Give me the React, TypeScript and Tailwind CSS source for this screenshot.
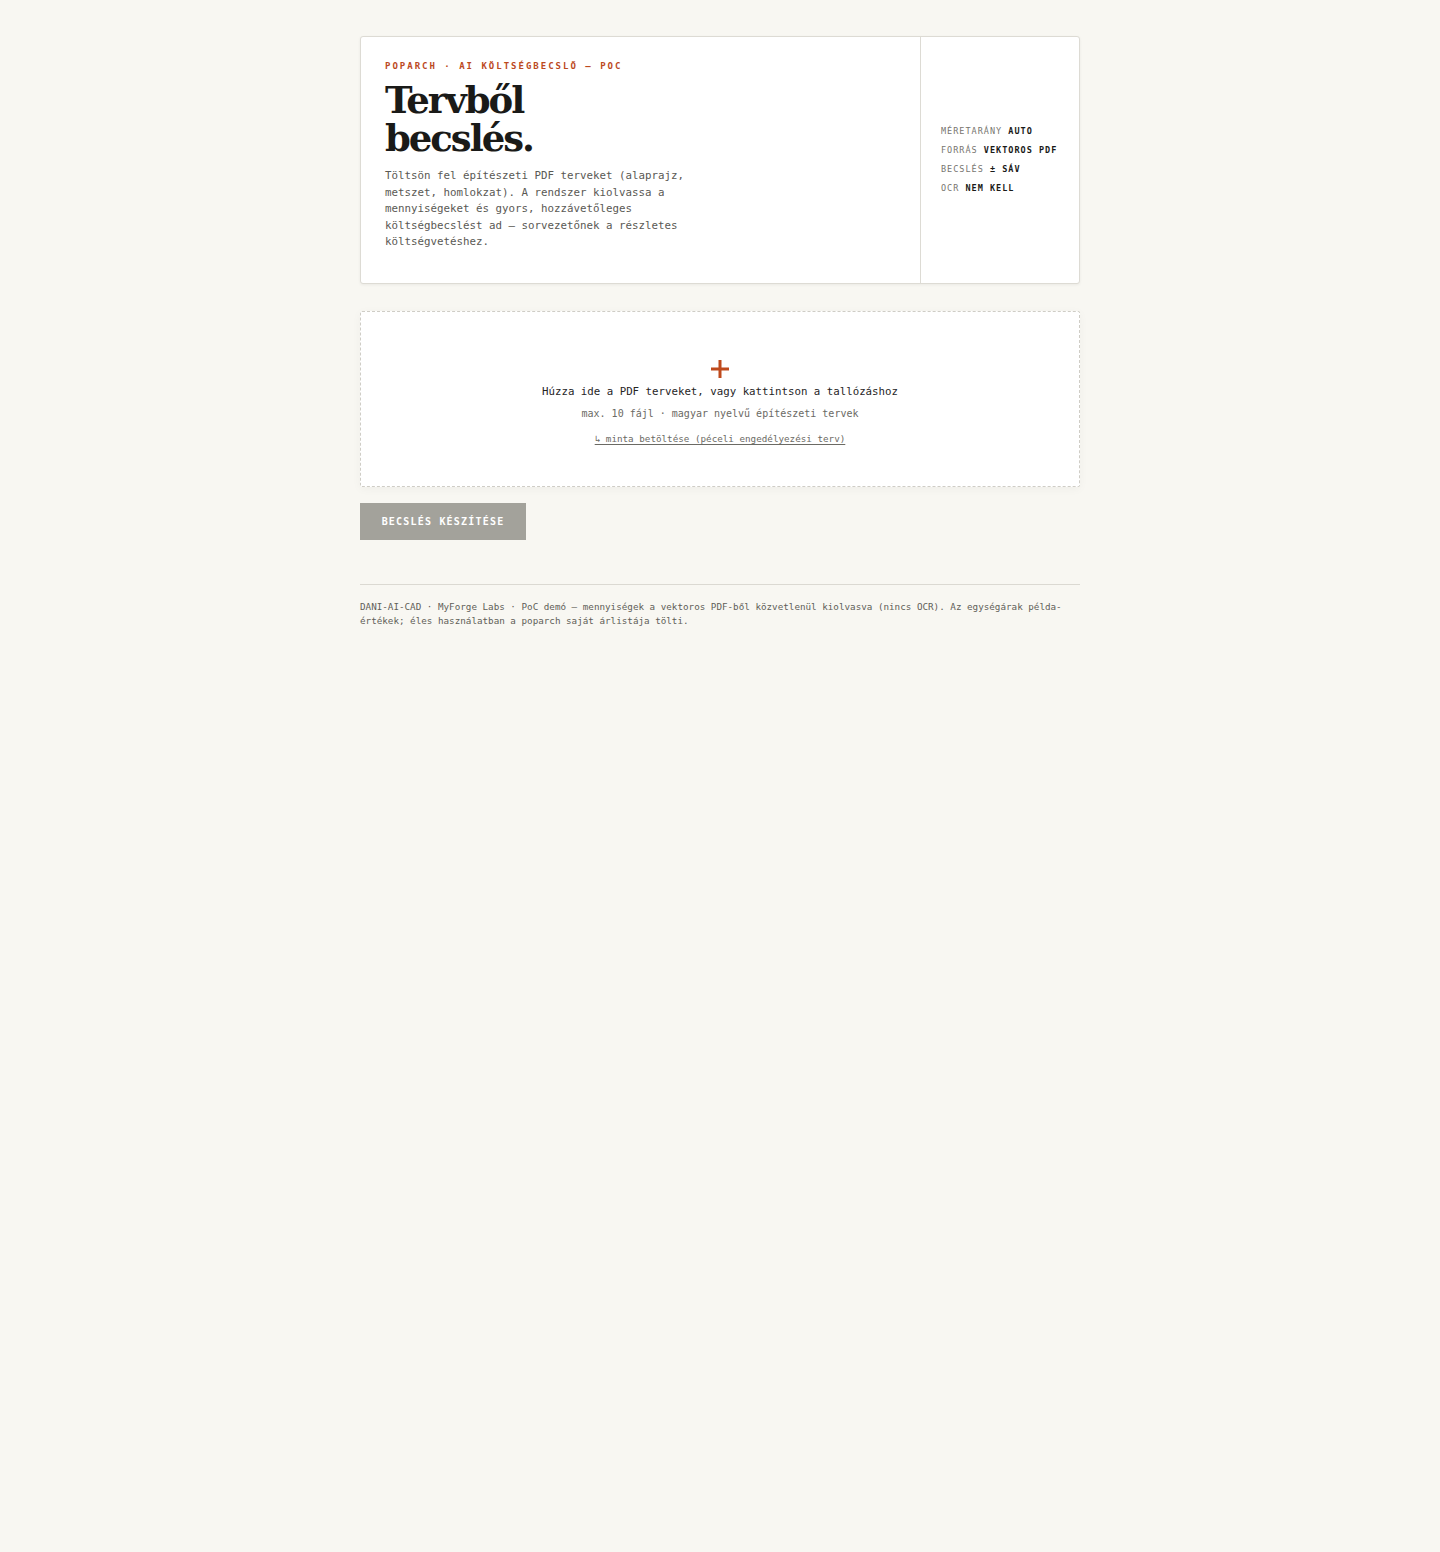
const mono = { fontFamily: '"DejaVu Sans Mono", "Liberation Mono", monospace' };
const serif = { fontFamily: '"DejaVu Serif", "Liberation Serif", serif' };

const specs = [
  { label: 'MÉRETARÁNY', value: 'AUTO' },
  { label: 'FORRÁS', value: 'VEKTOROS PDF' },
  { label: 'BECSLÉS', value: '± SÁV' },
  { label: 'OCR', value: 'NEM KELL' },
];

export default function App() {
  return (
    <div className="min-h-[1552px] bg-[#f8f7f2] text-[#1c1b19]" style={mono}>
      <div className="mx-auto w-[720px] pt-9">
        {/* fejléc kártya */}
        <div className="flex bg-white border border-[#dddbd4] rounded-[3px] shadow-[0_1px_3px_rgba(0,0,0,0.06)]">
          <div className="flex-1 pl-6 pt-[23px] pb-8">
            <div className="text-[9px] leading-3 font-bold tracking-[2px] text-[#bc4a1e]">
              POPARCH · AI KÖLTSÉGBECSLŐ — POC
            </div>
            <h1 className="mt-[9px] text-[37px] leading-[38px] font-bold tracking-[-0.055em] text-[#1a1a18]" style={serif}>
              Tervből
              <br />
              becslés.
            </h1>
            <p className="mt-[11px] max-w-[320px] text-[10.8px] leading-[16.5px] text-[#5a5954]">
              Töltsön fel építészeti PDF terveket (alaprajz, metszet, homlokzat). A rendszer kiolvassa a mennyiségeket és gyors, hozzávetőleges költségbecslést ad — sorvezetőnek a részletes költségvetéshez.
            </p>
          </div>
          <div className="w-[159px] border-l border-[#dddbd4] pl-5 flex flex-col justify-center gap-[7px]">
            {specs.map((s) => (
              <div key={s.label} className="text-[8.5px] leading-3 tracking-[1px]">
                <span className="text-[#77756f]">{s.label}</span>{' '}
                <span className="font-bold text-[#1a1a18]">{s.value}</span>
              </div>
            ))}
          </div>
        </div>

        {/* feltöltési zóna */}
        <div className="mt-[27px] h-[176px] bg-white border border-dashed border-[#cfcdc6] rounded-[2px] shadow-[0_2px_10px_rgba(0,0,0,0.04)] flex flex-col items-center pt-[47px]">
          <svg width="20" height="20" viewBox="0 0 20 20" className="text-[#bf4a1c]">
            <path d="M10 1v18M1 10h18" stroke="currentColor" strokeWidth="3" fill="none" />
          </svg>
          <div className="mt-[5px] text-[10.75px] leading-4 text-[#26251f]">
            Húzza ide a PDF terveket, vagy kattintson a tallózáshoz
          </div>
          <div className="mt-[6px] text-[10px] leading-4 text-[#6b6a64]">
            max. 10 fájl · magyar nyelvű építészeti tervek
          </div>
          <div className="mt-[9px] text-[9.25px] leading-4 text-[#6b6a64] underline underline-offset-2">
            ↳ minta betöltése (péceli engedélyezési terv)
          </div>
        </div>

        {/* gomb */}
        <button className="mt-4 h-[37px] w-[166px] bg-[#a3a29b] text-white text-[10px] font-bold tracking-[1.2px]">
          BECSLÉS KÉSZÍTÉSE
        </button>

        {/* lábléc */}
        <div className="mt-[44px] border-t border-[#dbd9d2] pt-[15px] text-[9.25px] leading-[14px] text-[#5f5e58]">
          DANI-AI-CAD · MyForge Labs · PoC demó — mennyiségek a vektoros PDF-ből közvetlenül kiolvasva (nincs OCR). Az egységárak példa-értékek; éles használatban a poparch saját árlistája tölti.
        </div>
      </div>
    </div>
  );
}
